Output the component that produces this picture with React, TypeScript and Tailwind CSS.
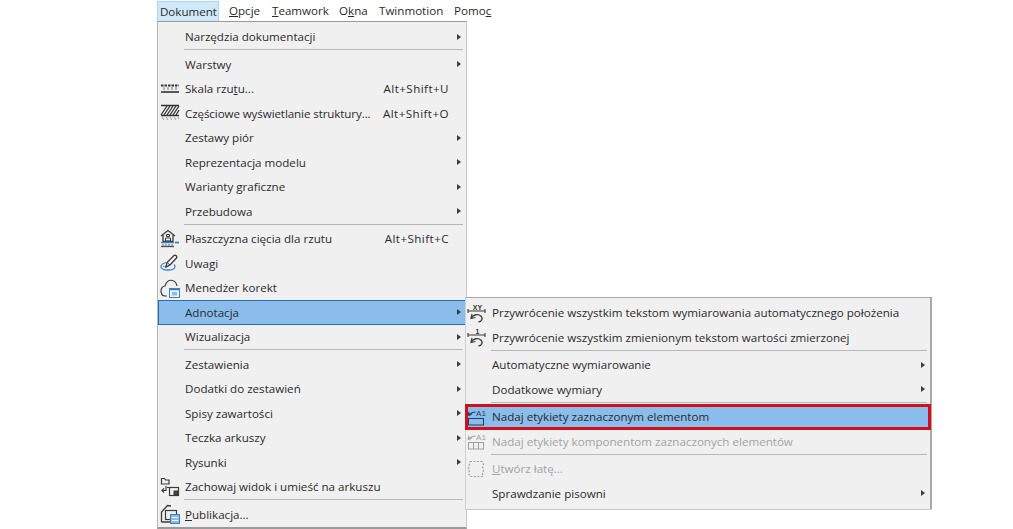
import React from "react";

function HatchIcon() {
  return (
    <svg width="20" height="18" viewBox="0 0 20 18" fill="none" stroke="#333">
      <path d="M1 1.500h18M1 11.500h18" strokeWidth="1.5" />
      <path d="M1 11l6-9M4 11l6-9M7 11l6-9M10 11l6-9M13 11l6-9M16 11l3-5" strokeWidth="1.300" />
      <path d="M2 13l2 3M6 13l2 3M10 13l2 3M14 13l2 3M18 13l1 2" stroke="#999" />
    </svg>
  );
}

function ScaleIcon() {
  return (
    <svg width="20" height="12" viewBox="0 0 20 12" fill="none" stroke="#333">
      <path d="M1 2.500h18" strokeDasharray="2.500 1" strokeWidth="1.800" />
      <path d="M4 4v3M8 4v3M12 4v3M16 4v3" stroke="#777" />
      <path d="M1 9h18" strokeWidth="1.600" />
    </svg>
  );
}

function CutPlaneIcon() {
  return (
    <svg width="20" height="20" viewBox="0 0 20 20" fill="none" stroke="#3a3a3a">
      <path d="M1 7l7-5.500L15 7" strokeWidth="1.300" />
      <path d="M3 6v6.500h10V6" strokeWidth="1.300" />
      <path d="M6.500 5.500h3v2h-3zM5.500 9h5v3h-5z" />
      <path d="M1 13.500h13" stroke="#2f7fd0" strokeWidth="1.500" />
      <path d="M15 13.500h4" stroke="#2f7fd0" strokeWidth="1.800" />
      <path d="M1 17.500h13" stroke="#444" strokeWidth="1.300" />
      <path d="M3 15v3M6 15v3M9 15v3M12 15v3" stroke="#666" />
    </svg>
  );
}

function NoteIcon() {
  return (
    <svg width="20" height="18" viewBox="0 0 20 18" fill="none" stroke="#3a3a3a">
      <path d="M6 8.500C3 9.500 1 11 1 12.500c0 2 3 3.500 7 3.500s7-1.500 7-3.500c0-1-.5-1.500-1-2" stroke="#3b85d1" strokeWidth="1.300" />
      <path d="M3 12c2 1.500 3 0 5 .5" stroke="#3b85d1" />
      <path d="M6 13l1-4.500 7-7c1.500-1 3.500 1 2.500 2.500L10 11z" fill="#f0f0f0" strokeWidth="1.300" />
      <path d="M7.500 9l2.500 2" />
    </svg>
  );
}

function CloudIcon() {
  return (
    <svg width="22" height="22" viewBox="0 0 22 22" fill="none" stroke="#3a3a3a">
      <path d="M7 19H5C2.500 19 1 17 1 14s2-5 4-5c1-4 4-6.500 7.500-5.500C15 4 16.500 6.500 17 9" strokeWidth="1.200" />
      <rect x="9.500" y="11.500" width="10" height="9" fill="#f0f0f0" stroke="#3b7fc4" />
      <path d="M10 12.500h9" stroke="#3b7fc4" strokeWidth="1.500" />
      <rect x="12" y="15" width="5" height="3.500" fill="#8db9e3" stroke="none" />
    </svg>
  );
}

function SheetIcon() {
  return (
    <svg width="20" height="20" viewBox="0 0 20 20" fill="none" stroke="#3a3a3a">
      <path d="M1.500 7V1.500h3l1 1.500h3.500v4z" strokeWidth="1.200" />
      <path d="M6 9v4.500H2m2-2l-2 2 2 2" strokeWidth="1.200" />
      <path d="M7 10.500h4" />
      <rect x="9.500" y="10.500" width="9" height="8" strokeWidth="1.200" />
      <rect x="14" y="14" width="3.500" height="3.500" fill="#444" />
    </svg>
  );
}

function PublishIcon() {
  return (
    <svg width="22" height="22" viewBox="0 0 22 22" fill="none" stroke="#3a3a3a">
      <path d="M1.500 19V9l6-6.500 3.500.5M1.500 19h9" strokeWidth="1.300" />
      <rect x="5.500" y="7.500" width="11" height="9" fill="#f0f0f0" strokeWidth="1.200" />
      <rect x="10.500" y="11.500" width="9" height="9" fill="#8db9e3" stroke="#3b7fc4" />
      <path d="M12 14.500h6M12 17.500h6" stroke="#fff" />
    </svg>
  );
}

function RestoreIcon({ top }: { top: string }) {
  return (
    <svg width="20" height="20" viewBox="0 0 20 20" fill="none" stroke="#3a3a3a">
      <text x="10.500" y="6.500" fontSize="7" fontWeight="700" textAnchor="middle" fill="#333" stroke="none" fontFamily="Liberation Sans, sans-serif">
        {top}
      </text>
      <path d="M1 8h17M1 6v4M18 6v4" strokeWidth="1.100" />
      <path d="M5 11l-1 4.500 4.500-1" strokeWidth="1.200" />
      <path d="M4.500 15C6 11.500 11 10.500 14 13c2 2.500 1 5.500-2.500 6" strokeWidth="1.300" />
    </svg>
  );
}

function LabelIcon({ muted }: { muted?: boolean }) {
  const c = muted ? "#a0a0a0" : "#1f3f5f";
  return (
    <svg width="20" height="18" viewBox="0 0 20 18" fill="none" stroke={c}>
      <text x="14" y="7.500" fontSize="8" textAnchor="middle" fill={c} stroke="none" fontFamily="Liberation Sans, sans-serif">
        A1
      </text>
      <path d="M1 7.500l3.500-1M1 7.500l1-3.500M1.500 7c2-1 3-3 7-3" strokeWidth="1.200" />
      <rect x="1.500" y="10.500" width="15" height="6.500" />
      {muted && <path d="M6.500 10.500v6.500M11.500 10.500v6.500" />}
    </svg>
  );
}

function PatchIcon() {
  return (
    <svg width="18" height="18" viewBox="0 0 18 18" fill="none" stroke="#a0a0a0" strokeWidth="1.200" strokeDasharray="2 1.500">
      <path d="M3 1.500h12l1.500 3-1 3 1 3-1 3 .5 3H3l-1.500-3 1-3-1-3 1-3z" />
    </svg>
  );
}

function Arrow({ right }: { right: string }) {
  return <span className={`absolute top-1/2 -translate-y-1/2 border-y-[3.5px] border-l-[4px] border-y-transparent border-l-[#3c3c3c] ${right}`} />;
}

type Row = {
  label: React.ReactNode;
  icon?: React.ReactNode;
  shortcut?: string;
  arrow?: boolean;
  active?: boolean;
  disabled?: boolean;
  boxed?: boolean;
};

function Separator({ left }: { left: string }) {
  return <div className={`h-[3px] pr-[3px] ${left}`}><div className="h-px w-full bg-[#b8b8b8]" /></div>;
}

function MenuRow({ row, iconW, arrowRight }: { row: Row; iconW: string; arrowRight: string }) {
  return (
    <div
      className={`relative flex h-[24.5px] items-center ${row.active ? "bg-[#8abdec] outline outline-1 outline-[#2d6ca6] -outline-offset-1" : ""} ${
        row.boxed ? "bg-[#8abdec] outline outline-[3px] outline-[#d2101c] -outline-offset-[2px]" : ""
      } ${row.disabled ? "text-[#a3a3a3]" : "text-[#2b2b2b]"}`}
    >
      <span className={`flex shrink-0 items-center ${iconW}`}>{row.icon}</span>
      <span className="whitespace-nowrap">{row.label}</span>
      {row.shortcut && <span className="absolute right-[17px] whitespace-nowrap tracking-[0.45px]">{row.shortcut}</span>}
      {row.arrow && <Arrow right={arrowRight} />}
    </div>
  );
}

export default function App() {
  const mainGroups: Row[][] = [
    [{ label: "Narzędzia dokumentacji", arrow: true }],
    [
      { label: "Warstwy", arrow: true },
      { label: <>Skala rzu<u>t</u>u...</>, icon: <ScaleIcon />, shortcut: "Alt+Shift+U" },
      { label: <span className="tracking-[-0.1px]">Częściowe wyświetlanie struktury...</span>, icon: <HatchIcon />, shortcut: "Alt+Shift+O" },
      { label: "Zestawy piór", arrow: true },
      { label: "Reprezentacja modelu", arrow: true },
      { label: "Warianty graficzne", arrow: true },
      { label: "Przebudowa", arrow: true },
    ],
    [
      { label: "Płaszczyzna cięcia dla rzutu", icon: <CutPlaneIcon />, shortcut: "Alt+Shift+C" },
      { label: "Uwagi", icon: <NoteIcon /> },
      { label: "Menedżer korekt", icon: <CloudIcon /> },
      { label: "Adnotacja", arrow: true, active: true },
      { label: "Wizualizacja", arrow: true },
    ],
    [
      { label: "Zestawienia", arrow: true },
      { label: "Dodatki do zestawień", arrow: true },
      { label: "Spisy zawartości", arrow: true },
      { label: "Teczka arkuszy", arrow: true },
      { label: "Rysunki", arrow: true },
      { label: "Zachowaj widok i umieść na arkuszu", icon: <SheetIcon /> },
    ],
    [{ label: <><u>P</u>ublikacja...</>, icon: <PublishIcon /> }],
  ];

  const subGroups: Row[][] = [
    [
      { label: "Przywrócenie wszystkim tekstom wymiarowania automatycznego położenia", icon: <RestoreIcon top="XY" /> },
      { label: "Przywrócenie wszystkim zmienionym tekstom wartości zmierzonej", icon: <RestoreIcon top="1" /> },
    ],
    [
      { label: "Automatyczne wymiarowanie", arrow: true },
      { label: "Dodatkowe wymiary", arrow: true },
    ],
    [
      { label: "Nadaj etykiety zaznaczonym elementom", icon: <LabelIcon />, boxed: true },
      { label: "Nadaj etykiety komponentom zaznaczonych elementów", icon: <LabelIcon muted />, disabled: true },
    ],
    [
      { label: <><u>U</u>twórz łatę...</>, icon: <PatchIcon />, disabled: true },
      { label: "Sprawdzanie pisowni", arrow: true },
    ],
  ];

  return (
    <div className="relative h-[529px] w-[1013px] overflow-hidden bg-white pl-[157px] font-['Open_Sans',sans-serif] text-[11.6px] text-[#2b2b2b]">
      {/* menu bar */}
      <div className="flex h-[21px] items-end">
        <div className="flex h-[20px] w-[62px] items-center justify-end border border-b-0 border-[#a9d6f5] bg-[#cfe8fa] pr-[1px]">Dokument</div>
        <div className="flex h-[20px] items-center pl-[10px]">
          <span className="w-[43px]"><u>O</u>pcje</span>
          <span className="w-[67px]"><u>T</u>eamwork</span>
          <span className="w-[40px]">O<u>k</u>na</span>
          <span className="w-[75px]">Twinmotion</span>
          <span>Pomo<u>c</u></span>
        </div>
      </div>

      {/* main menu */}
      <div className="w-[310px] border-x border-b-2 border-t border-[#9a9a9a] border-l-[#b5b5b5] border-r-[#c8c8c8] bg-[#f0f0f0] pt-[2.5px]">
        {mainGroups.map((group, i) => (
          <React.Fragment key={i}>
            {i > 0 && <Separator left="ml-[26px]" />}
            {group.map((row, j) => (
              <MenuRow key={j} row={row} iconW="w-[27px] pl-[2px]" arrowRight="right-[5px]" />
            ))}
          </React.Fragment>
        ))}
      </div>

      {/* submenu */}
      <div className="absolute left-[465px] top-[297px] w-[467px] border-r-2 border-t border-[#a8a8a8] border-l border-l-[#d0d0d0] bg-[#f0f0f0] pb-[3px] pt-[2.5px] shadow-[0_1px_0_#c8c8c8]">
        {subGroups.map((group, i) => (
          <React.Fragment key={i}>
            {i > 0 && <Separator left="ml-[25px]" />}
            {group.map((row, j) => (
              <MenuRow key={j} row={row} iconW="w-[26px] pl-[1px]" arrowRight="right-[5px]" />
            ))}
          </React.Fragment>
        ))}
      </div>
    </div>
  );
}
